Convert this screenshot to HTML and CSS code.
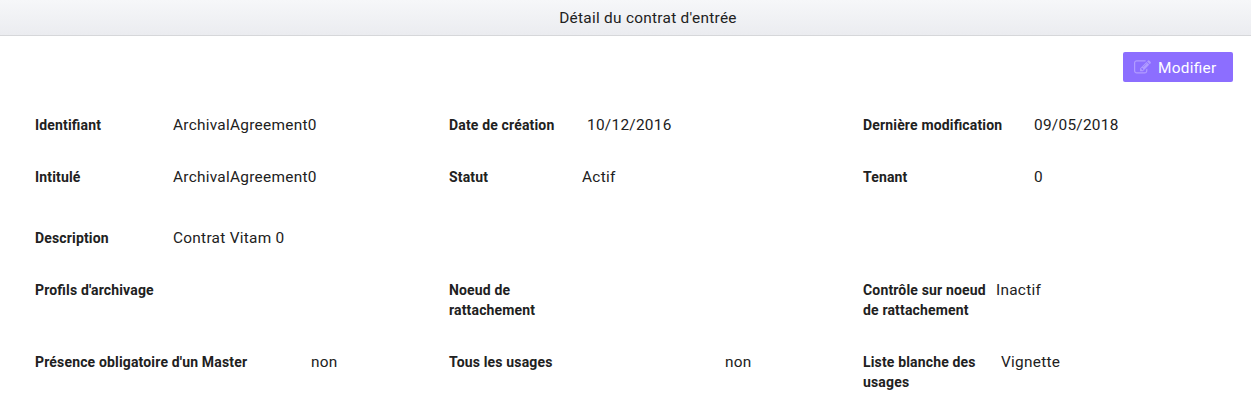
FILE: index.html
```html
<!DOCTYPE html>
<html lang="fr">
<head>
<meta charset="utf-8">
<title>Détail du contrat d'entrée</title>
<link rel="stylesheet" href="styles.css">
</head>
<body>
<header class="panel-header">Détail du contrat d'entrée</header>
<div class="toolbar">
  <button class="edit-button" type="button">
    <svg class="edit-icon" viewBox="0 0 1792 1792" aria-hidden="true"><path d="M888 1184l116-116-152-152-116 116v56h96v96h56zm440-720q-16-16-33 1l-350 350q-17 17-1 33t33-1l350-350q17-17 1-33zm80 594v190q0 119-84.500 203.500t-203.500 84.500h-832q-119 0-203.500-84.500t-84.500-203.500v-832q0-119 84.500-203.500t203.500-84.500h832q63 0 117 25 15 7 18 23 3 17-9 29l-49 49q-14 14-32 8-23-6-45-6h-832q-66 0-113 47t-47 113v832q0 66 47 113t113 47h832q66 0 113-47t47-113v-126q0-13 9-22l64-64q15-15 35-7t20 29zm-96-738l288 288-672 672h-288v-288zm444 132l-92 92-288-288 92-92q28-28 68-28t68 28l152 152q28 28 28 68t-28 68z"/></svg>
    <span>Modifier</span>
  </button>
</div>
<main class="details">
  <div class="row">
    <div class="field cols-138"><span class="label">Identifiant</span><span class="value">ArchivalAgreement0</span></div>
    <div class="field cols-138"><span class="label">Date de création</span><span class="value">10/12/2016</span></div>
    <div class="field cols-171"><span class="label">Dernière modification</span><span class="value">09/05/2018</span></div>
  </div>
  <div class="row row-status">
    <div class="field cols-138"><span class="label">Intitulé</span><span class="value">ArchivalAgreement0</span></div>
    <div class="field cols-133"><span class="label">Statut</span><span class="value">Actif</span></div>
    <div class="field cols-171"><span class="label">Tenant</span><span class="value">0</span></div>
  </div>
  <div class="row">
    <div class="field cols-138"><span class="label">Description</span><span class="value">Contrat Vitam 0</span></div>
  </div>
  <div class="row row-tall">
    <div class="field cols-138"><span class="label">Profils d'archivage</span></div>
    <div class="field cols-138"><span class="label">Noeud de rattachement</span></div>
    <div class="field cols-133"><span class="label">Contrôle sur noeud de rattachement</span><span class="value">Inactif</span></div>
  </div>
  <div class="row row-tall">
    <div class="field cols-276"><span class="label">Présence obligatoire d'un Master</span><span class="value">non</span></div>
    <div class="field cols-276"><span class="label">Tous les usages</span><span class="value">non</span></div>
    <div class="field cols-138"><span class="label">Liste blanche des usages</span><span class="value">Vignette</span></div>
  </div>
</main>
</body>
</html>
```
FILE: styles.css
```css
* { box-sizing: border-box; }
body {
  margin: 0;
  background: #fff;
  color: #212121;
  font: 15.4px/20px Roboto, sans-serif;
  letter-spacing: 0.27px;
  font-feature-settings: "liga" 1;
}
.panel-header {
  height: 36px;
  padding-left: 45px;
  border-bottom: 1px solid #d6d7da;
  background: linear-gradient(#f6f7f9, #ebecf0);
  line-height: 36px;
  text-align: center;
}
.toolbar {
  display: flex;
  justify-content: flex-end;
  padding: 16px 18px 0 0;
}
.edit-button {
  display: flex;
  align-items: center;
  gap: 7px;
  width: 110px;
  height: 30px;
  padding: 1px 0 0 11px;
  border: 0;
  border-radius: 2px;
  background: #8c6eff;
  color: #fff;
  font: inherit;
  letter-spacing: inherit;
  font-feature-settings: inherit;
}
.edit-icon { width: 17px; height: 17px; margin-top: -1px; fill: #b19cff; }
.details { padding: 33px 9px 0 35px; }
.row {
  display: grid;
  grid-template-columns: 414px 414px 1fr;
  height: 52px;
}
.row-status { height: 61px; }
.row-tall { height: 72px; }
.field { display: grid; align-content: start; }
.cols-133 { grid-template-columns: 133px 1fr; }
.cols-138 { grid-template-columns: 138px 1fr; }
.cols-171 { grid-template-columns: 171px 1fr; }
.cols-276 { grid-template-columns: 276px 1fr; }
.label {
  padding-right: 8px;
  font-size: 14px;
  font-weight: 700;
  letter-spacing: 0.16px;
}
```
